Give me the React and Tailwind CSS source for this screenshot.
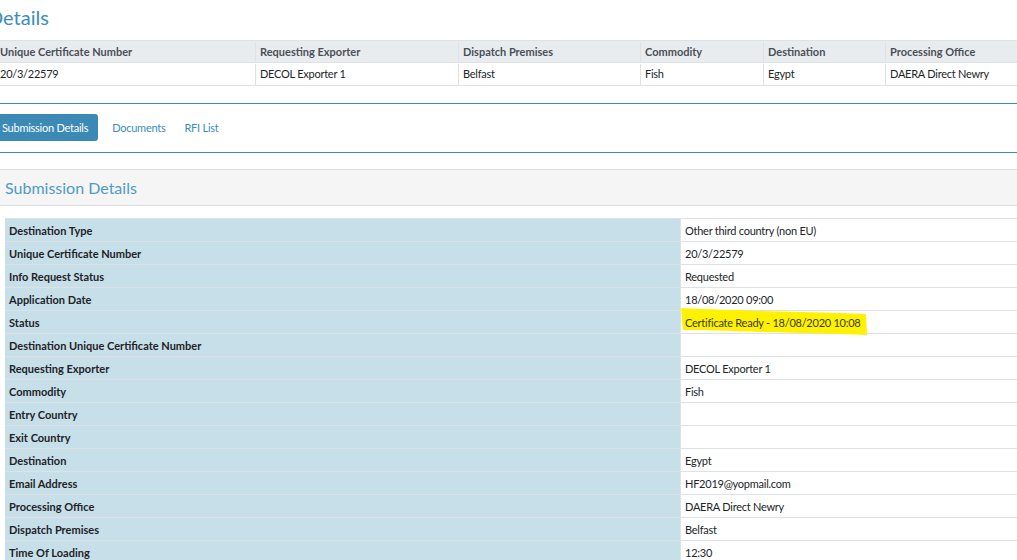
import { useState } from "react";

const summary = {
  headers: [
    "Unique Certificate Number",
    "Requesting Exporter",
    "Dispatch Premises",
    "Commodity",
    "Destination",
    "Processing Office",
  ],
  values: ["20/3/22579", "DECOL Exporter 1", "Belfast", "Fish", "Egypt", "DAERA Direct Newry"],
  widths: ["w-[260px]", "w-[203px]", "w-[182px]", "w-[123px]", "w-[122px]", "w-[160px]"],
};

const details = [
  ["Destination Type", "Other third country (non EU)"],
  ["Unique Certificate Number", "20/3/22579"],
  ["Info Request Status", "Requested"],
  ["Application Date", "18/08/2020 09:00"],
  ["Status", "Certificate Ready - 18/08/2020 10:08", true],
  ["Destination Unique Certificate Number", ""],
  ["Requesting Exporter", "DECOL Exporter 1"],
  ["Commodity", "Fish"],
  ["Entry Country", ""],
  ["Exit Country", ""],
  ["Destination", "Egypt"],
  ["Email Address", "HF2019@yopmail.com"],
  ["Processing Office", "DAERA Direct Newry"],
  ["Dispatch Premises", "Belfast"],
  ["Time Of Loading", "12:30"],
];

export default function App() {
  const [tab, setTab] = useState("Submission Details");

  return (
    <div
      className="h-[560px] w-[1017px] overflow-hidden bg-white text-[11px] tracking-[-0.25px] text-[#212529]"
      style={{ fontFamily: "Lato, 'Noto Sans', sans-serif" }}
    >
      <div className="w-[1060px]">
        <h1 className="ml-[-12px] h-[40px] pt-[3px] text-[20px] leading-[28px] tracking-normal text-[#3c8dbc]">
          Details
        </h1>

        {/* summary table */}
        <div className="ml-[-5px] flex flex-col">
          <div className="flex h-[23px] border-y border-[#dee2e6] bg-[#e9ecef] pt-[1px] font-bold tracking-normal text-[#495057]">
            {summary.headers.map((h, i) => (
              <div
                key={h}
                className={`${summary.widths[i]} flex items-center border-l border-[#dee2e6] px-[4px]`}
              >
                {h}
              </div>
            ))}
          </div>
          <div className="flex h-[23px] border-b border-[#dee2e6] pt-[1px]">
            {summary.values.map((v, i) => (
              <div
                key={i}
                className={`${summary.widths[i]} flex items-center border-l border-[#dee2e6] px-[4px]`}
              >
                {v}
              </div>
            ))}
          </div>
        </div>

        {/* tabs */}
        <div className="mt-[17px] flex items-center gap-[9px] border-y border-[#3c8dbc] pt-[10px] pb-[11px]">
          {["Submission Details", "Documents", "RFI List"].map((t) => (
            <button
              key={t}
              onClick={() => setTab(t)}
              className={
                t === tab
                  ? "ml-[-8px] h-[27px] rounded-[3px] bg-[#3a8ab5] px-[10px] pt-[1px] text-white"
                  : "h-[27px] px-[5px] pt-[1px] text-[#3c8dbc]"
              }
            >
              {t}
            </button>
          ))}
        </div>

        {/* panel */}
        <div className="mt-[16px]">
          <div className="flex h-[37px] items-center border-y border-[#dddddd] bg-[#f5f5f5] pl-[5px] pt-[1px] text-[16px] tracking-normal text-[#4d9bc9]">
            Submission Details
          </div>

          <div className="ml-[5px] mt-[12px] border-t border-[#dee2e6]">
            {details.map(([label, value, marked]) => (
              <div key={label} className="flex h-[23px] border-b border-[#dee2e6]">
                <div className="flex w-[675px] items-center bg-[#c7dfe9] px-[4px] pt-[2px] font-bold tracking-normal text-[#1d2327]">
                  {label}
                </div>
                <div className="relative flex flex-1 items-center border-l border-[#dee2e6] px-[4px] pt-[2px]">
                  {marked && (
                    <svg
                      className="absolute left-[-1px] top-[-4px]"
                      width="188"
                      height="30"
                      viewBox="0 0 188 30"
                    >
                      <path
                        d="M1 1 C40 3 90 4 120 5 C150 6 170 6 186 7 L187 28 C160 27 120 26 80 25 C50 24 20 23 3 23 Z"
                        fill="#fff200"
                      />
                    </svg>
                  )}
                  <span className={marked ? "relative text-[#3a3a10]" : ""}>{value}</span>
                </div>
              </div>
            ))}
          </div>
        </div>
      </div>
    </div>
  );
}
